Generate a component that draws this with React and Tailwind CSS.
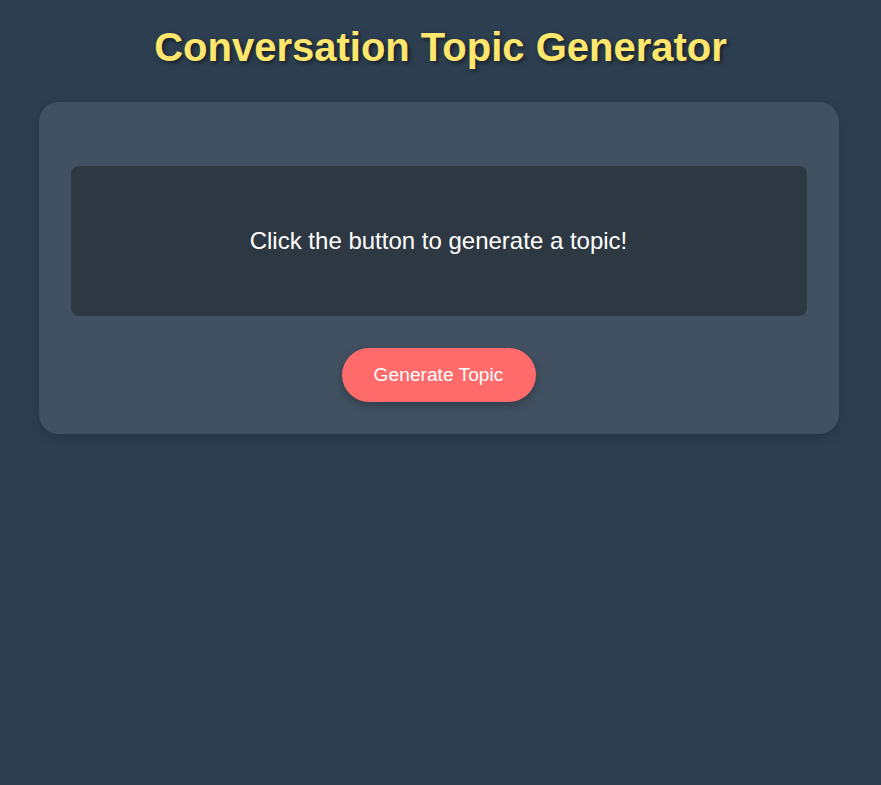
export default function App() {
  return (
    <div
      className="min-h-[785px] bg-[#2c3e50] flex flex-col items-center pt-[24px]"
      style={{ fontFamily: '"Liberation Sans", Arial, sans-serif' }}
    >
      <h1 className="text-[40px] leading-[46px] font-bold text-[#ffe66d] [text-shadow:2px_2px_4px_rgba(0,0,0,0.5)] mb-[32px]">
        Conversation Topic Generator
      </h1>
      <div className="w-[800px] mr-[4px] bg-[#415161] rounded-[20px] px-[32px] pt-[64px] pb-[32px] flex flex-col items-center shadow-[0_4px_12px_rgba(0,0,0,0.15)]">
        <div className="w-full h-[150px] bg-[#2e3843] rounded-[8px] flex items-center justify-center">
          <p className="text-[24px] text-white">Click the button to generate a topic!</p>
        </div>
        <button className="mt-[32px] w-[194px] h-[54px] rounded-full bg-[#ff6b6b] text-white text-[19.2px] shadow-[0_4px_10px_rgba(0,0,0,0.25)]">
          Generate Topic
        </button>
      </div>
    </div>
  );
}
